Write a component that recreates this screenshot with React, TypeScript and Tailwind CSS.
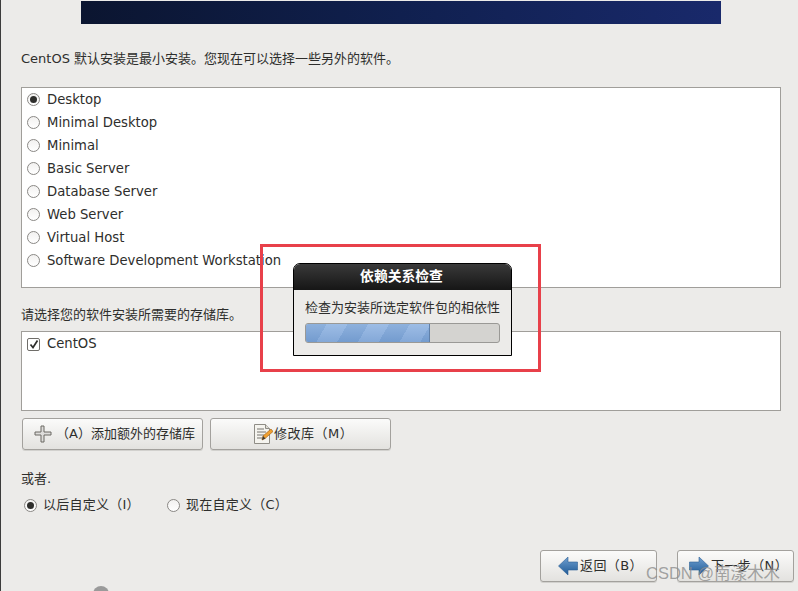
const font = { fontFamily: '"DejaVu Sans", "Noto Sans CJK SC", sans-serif' };

const groups = [
  "Desktop",
  "Minimal Desktop",
  "Minimal",
  "Basic Server",
  "Database Server",
  "Web Server",
  "Virtual Host",
  "Software Development Workstation",
];

function Radio({ checked }: { checked?: boolean }) {
  return (
    <span className="flex h-[13px] w-[13px] shrink-0 items-center justify-center rounded-full border border-[#8a8885] bg-gradient-to-b from-[#f2f1f0] to-white">
      {checked && <span className="h-[7px] w-[7px] rounded-full bg-[#2e2e2c]" />}
    </span>
  );
}

function PlusIcon() {
  return (
    <svg width="18" height="18" viewBox="0 0 18 18">
      <path d="M7 1h3v6h7v3h-7v7H7v-7H1V7h6z" fill="#dedddb" stroke="#6a6862" strokeWidth="1" />
    </svg>
  );
}

function EditIcon() {
  return (
    <svg width="20" height="22" viewBox="0 0 20 22">
      <path d="M1.5 1.5h11l4 4v15h-15z" fill="#f5f4ef" stroke="#8f8d86" />
      <path d="M12.5 1.5v4h4" fill="#dcdad3" stroke="#8f8d86" />
      <path d="M4 6h7M4 9h9M4 12h7M4 15h5" stroke="#77756f" strokeWidth="1" />
      <path d="M9 17l1-4 8-7 2 2.5-8 7z" fill="#f0a030" stroke="#a8651a" strokeWidth="0.7" />
      <path d="M9 17l1-4 2.5 2.5z" fill="#3a3a38" />
    </svg>
  );
}

function ArrowIcon({ dir }: { dir: "left" | "right" }) {
  return (
    <svg width="20" height="20" viewBox="0 0 20 20">
      <defs>
        <linearGradient id={`arrow-${dir}`} x1="0" y1="0" x2="0" y2="1">
          <stop offset="0" stopColor="#6f9fd0" />
          <stop offset="1" stopColor="#1f5a96" />
        </linearGradient>
      </defs>
      <path
        d={dir === "left" ? "M0.5 10L10 1v5h9.5v8H10v5z" : "M19.5 10L10 1v5H0.5v8H10v5z"}
        fill={`url(#arrow-${dir})`}
        stroke="#2b5f96"
        strokeWidth="0.6"
      />
    </svg>
  );
}

function Button({ className, children }: { className: string; children: React.ReactNode }) {
  return (
    <div
      className={`flex items-center rounded-[3px] border border-[#a3a19d] bg-gradient-to-b from-[#fbfbfa] to-[#e3e2df] shadow-[0_1px_0_#d2d1ce] ${className}`}
    >
      {children}
    </div>
  );
}

export default function App() {
  return (
    <div
      className="relative h-[591px] w-[798px] overflow-hidden border-l border-[#3c3c3c] bg-[#ecebe9] text-[#2e2e2c]"
      style={font}
    >
      <div className="ml-[80px] mt-px h-[23px] w-[640px] bg-gradient-to-r from-[#0b1530] via-[#10204f] to-[#19296b]" />

      <p className="ml-5 mt-[26px] h-[18px] text-[13px] leading-[18px]">CentOS 默认安装是最小安装。您现在可以选择一些另外的软件。</p>

      <div className="ml-5 mt-[19px] h-[201px] w-[760px] border border-[#a09e9a] bg-white pl-[5px]">
        {groups.map((name, i) => (
          <div key={name} className="flex h-[23px] items-center gap-[7px] text-[13.2px]">
            <Radio checked={i === 0} />
            <span>{name}</span>
          </div>
        ))}
      </div>

      <p className="ml-5 mt-[18px] h-[18px] text-[13px] leading-[18px]">请选择您的软件安装所需要的存储库。</p>

      <div className="ml-5 mt-[7px] h-[80px] w-[760px] border border-[#a09e9a] bg-white pl-[5px] pt-[2px]">
        <div className="flex h-[20px] items-center gap-[7px] text-[13.2px]">
          <span className="flex h-[13px] w-[13px] items-center justify-center rounded-[2px] border border-[#6f6d69] bg-white">
            <svg width="10" height="10" viewBox="0 0 10 10">
              <path d="M1.5 5.5L4 8.5L8.5 1.5" fill="none" stroke="#2e2e2c" strokeWidth="1.7" />
            </svg>
          </span>
          <span>CentOS</span>
        </div>
      </div>

      <div className="ml-[21px] mt-[7px] flex gap-[7px] text-[13px]">
        <Button className="h-[32px] w-[181px] pl-[11px]">
          <PlusIcon />
          <span className="ml-[4px] whitespace-nowrap">（A）添加额外的存储库</span>
        </Button>
        <Button className="h-[32px] w-[181px] pl-[42px]">
          <EditIcon />
          <span className="ml-px whitespace-nowrap tracking-[0.5px]">修改库（M）</span>
        </Button>
      </div>

      <p className="ml-5 mt-[20px] h-[18px] text-[13px] leading-[18px]">或者.</p>

      <div className="ml-[23px] mt-[7px] flex h-[20px] items-center text-[13px]">
        <Radio checked />
        <span className="ml-[6px] w-[124px] whitespace-nowrap tracking-[0.25px]">以后自定义（I）</span>
        <Radio />
        <span className="ml-[6px] whitespace-nowrap tracking-[0.25px]">现在自定义（C）</span>
      </div>

      <div className="mr-[4px] mt-[35px] flex justify-end gap-[20px] text-[13px]">
        <Button className="h-[32px] w-[117px] pl-[17px]">
          <ArrowIcon dir="left" />
          <span className="ml-[2px] whitespace-nowrap tracking-[0.4px]">返回（B）</span>
        </Button>
        <Button className="h-[32px] w-[117px] border-[#7f9fc4] pl-[11px]">
          <ArrowIcon dir="right" />
          <span className="ml-[2px] whitespace-nowrap tracking-[0.4px]">下一步（N）</span>
        </Button>
      </div>

      <div className="absolute left-[92px] top-[586px] h-[16px] w-[16px] rounded-full bg-[#9a9a9a]" />

      <div className="absolute left-[259px] top-[244px] h-[128px] w-[281px] border-[3px] border-[#e8404a]" />

      <div className="absolute left-[292px] top-[263px] w-[219px] rounded-t-[7px] border border-black bg-[#ecebe9]">
        <div className="flex h-[26px] items-center justify-center rounded-t-[6px] bg-gradient-to-b from-[#3a3a3a] to-[#161616] pb-[2px] pr-[2px] text-[13.8px] font-bold text-white">
          依赖关系检查
        </div>
        <div className="px-[11px] pb-[12px] pt-[8px]">
          <p className="whitespace-nowrap text-[13px] leading-[20px]">检查为安装所选定软件包的相依性</p>
          <div className="mt-[5px] h-[20px] w-[195px] overflow-hidden rounded-[3px] border border-[#9a9996] bg-[#d4d3d0]">
            <div className="h-full w-[124px] border-r border-[#5f7fa8] bg-[linear-gradient(to_bottom,rgba(255,255,255,0.12),rgba(40,80,140,0.12)),repeating-linear-gradient(120deg,#7ea6d8_0px,#7ea6d8_18px,#90b4e2_18px,#90b4e2_36px)]" />
          </div>
        </div>
      </div>

      <div
        className="absolute left-[645px] top-[563px] whitespace-nowrap text-[16.5px] leading-[20px] text-[#8d8d8d]/80"
        style={{ fontFamily: '"Liberation Sans", "Noto Sans CJK SC", sans-serif' }}
      >
        CSDN @南漾木木
      </div>
    </div>
  );
}
